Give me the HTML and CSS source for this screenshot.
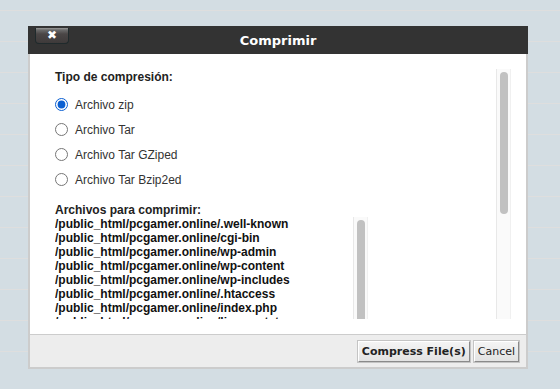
FILE: index.html
```html
<!DOCTYPE html>
<html lang="es">
<head>
    <meta charset="UTF-8">
    <meta name="viewport" content="width=device-width, initial-scale=1.0">
    <title>Comprimir</title>
    <link rel="stylesheet" href="styles.css">
</head>
<body>
    <div class="rows">
        <div class="row"></div>
        <div class="row"></div>
        <div class="row"></div>
        <div class="row"></div>
        <div class="row"></div>
        <div class="row"></div>
        <div class="row"></div>
        <div class="row"></div>
        <div class="row"></div>
        <div class="row"></div>
        <div class="row"></div>
        <div class="row"></div>
    </div>

    <div class="dialog">
        <div class="titlebar">
            <button class="close" type="button">&#x2716;</button>
            <h2>Comprimir</h2>
        </div>
        <div class="dialog-body">
            <div class="scroll">
                <div class="scroll-content">
                    <p class="label">Tipo de compresión:</p>
                    <label class="option"><input type="radio" name="type" checked> Archivo zip</label>
                    <label class="option"><input type="radio" name="type"> Archivo Tar</label>
                    <label class="option"><input type="radio" name="type"> Archivo Tar GZiped</label>
                    <label class="option"><input type="radio" name="type"> Archivo Tar Bzip2ed</label>

                    <p class="label files-label">Archivos para comprimir:</p>
                    <div class="files">
                        <div class="file-list">
                            <div>/public_html/pcgamer.online/.well-known</div>
                            <div>/public_html/pcgamer.online/cgi-bin</div>
                            <div>/public_html/pcgamer.online/wp-admin</div>
                            <div>/public_html/pcgamer.online/wp-content</div>
                            <div>/public_html/pcgamer.online/wp-includes</div>
                            <div>/public_html/pcgamer.online/.htaccess</div>
                            <div>/public_html/pcgamer.online/index.php</div>
                            <div>/public_html/pcgamer.online/license.txt</div>
                        </div>
                        <div class="scrollbar small">
                            <div class="thumb"></div>
                        </div>
                    </div>
                </div>
                <div class="scrollbar">
                    <div class="thumb"></div>
                </div>
            </div>
        </div>
        <div class="footer">
            <button class="button1 primary" type="button">Compress File(s)</button>
            <button class="button1" type="button">Cancel</button>
        </div>
    </div>
</body>
</html>
```

FILE: styles.css
```css
body {
    margin: 0;
    height: 389px;
    overflow: hidden;
    background-color: #d3dde3;
    font-family: "Liberation Sans", Arial, sans-serif;
}
.rows {
    padding-top: 10px;
}
.row {
    height: 30px;
    border-top: 1px solid #dedede;
}
.dialog {
    position: absolute;
    left: 28px;
    top: 26px;
    width: 500px;
    display: flex;
    flex-direction: column;
}
.titlebar {
    height: 28px;
    background-color: #333333;
    display: flex;
    align-items: center;
    justify-content: center;
    position: relative;
}
.titlebar h2 {
    margin: 0;
    color: #ffffff;
    font-family: "DejaVu Sans", Verdana, sans-serif;
    font-size: 13px;
    font-weight: bold;
}
.close {
    position: absolute;
    left: 7px;
    top: 2px;
    width: 34px;
    height: 16px;
    padding: 0;
    border: 1px solid #1f2a2c;
    border-top: none;
    border-radius: 0 0 4px 4px;
    background: linear-gradient(#9a9a9a 0, #6a6a6a 2px, #4a4646 6px, #3e3a3a 100%);
    color: #ffffff;
    font-size: 12px;
    line-height: 15px;
    font-family: "DejaVu Sans", sans-serif;
}
.dialog-body {
    background-color: #ffffff;
    border-left: 2px solid #cccccc;
    border-right: 2px solid #cccccc;
    padding: 15px;
}
.scroll {
    height: 250px;
    display: flex;
    overflow: hidden;
}
.scroll-content {
    flex: 1;
    padding: 1px 0 0 10px;
}
.scrollbar {
    width: 15px;
    box-sizing: border-box;
    background-color: #fafafa;
    border-left: 1px solid #e8e8e8;
    border-right: 1px solid #f0f0f0;
    padding: 3px 2px 0 3px;
    flex-shrink: 0;
}
.thumb {
    height: 142px;
    background-color: #c1c1c1;
    border-radius: 4px;
}
.scrollbar.small .thumb {
    height: 110px;
}
.label {
    margin: 0;
    font-size: 12px;
    font-weight: bold;
    line-height: 14px;
    color: #222222;
}
.option {
    display: flex;
    align-items: center;
    gap: 7px;
    font-size: 12px;
    color: #333333;
    height: 25px;
}
.option:first-of-type {
    margin-top: 8px;
}
.option input {
    margin: 0;
    width: 13px;
    height: 13px;
    accent-color: #0a5fd2;
}
.files-label {
    margin-top: 11px;
}
.files {
    width: 313px;
    height: 110px;
    display: flex;
}
.file-list {
    flex: 1;
    overflow: hidden;
    font-size: 12px;
    font-weight: bold;
    line-height: 14px;
    color: #111111;
}
.footer {
    height: 32px;
    background-color: #ededed;
    border: 2px solid #cccccc;
    border-top: 1px solid #cccccc;
    display: flex;
    justify-content: flex-end;
    align-items: center;
    gap: 4px;
    padding-right: 7px;
}
.button1 {
    height: 21px;
    padding: 0 3px;
    font-family: "DejaVu Sans", Verdana, sans-serif;
    font-size: 11px;
    color: #222222;
    background: linear-gradient(#f4f4f4, #e2e2e2);
    border: 1px solid;
    border-color: #ffffff #8a8a8a #8a8a8a #ffffff;
    box-shadow: 0 0 0 1px #c4c4c4;
}
.primary {
    font-weight: bold;
}
```
